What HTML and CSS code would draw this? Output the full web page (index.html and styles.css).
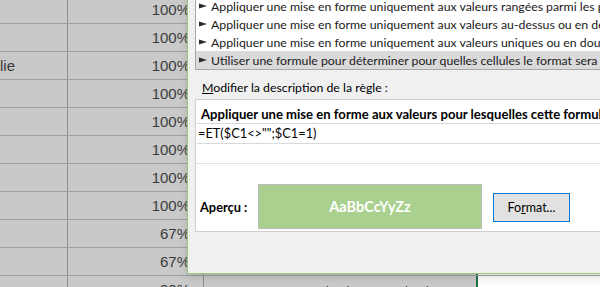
FILE: index.html
```html
<!DOCTYPE html>
<html lang="fr">
<head>
  <meta charset="UTF-8" />
  <title>Nouvelle règle de mise en forme</title>
  <link rel="stylesheet" href="styles.css">
</head>
<body>
  <div class="sheet">
    <div class="row"><div class="cell a"></div><div class="cell b">100%</div><div class="cell c"></div><div class="cell d"></div></div>
    <div class="row"><div class="cell a"></div><div class="cell b">100%</div><div class="cell c"></div><div class="cell d"></div></div>
    <div class="row"><div class="cell a">lie</div><div class="cell b">100%</div><div class="cell c"></div><div class="cell d"></div></div>
    <div class="row"><div class="cell a"></div><div class="cell b">100%</div><div class="cell c"></div><div class="cell d"></div></div>
    <div class="row"><div class="cell a"></div><div class="cell b">100%</div><div class="cell c"></div><div class="cell d"></div></div>
    <div class="row"><div class="cell a"></div><div class="cell b">100%</div><div class="cell c"></div><div class="cell d"></div></div>
    <div class="row"><div class="cell a"></div><div class="cell b">100%</div><div class="cell c"></div><div class="cell d"></div></div>
    <div class="row"><div class="cell a"></div><div class="cell b">100%</div><div class="cell c"></div><div class="cell d"></div></div>
    <div class="row"><div class="cell a"></div><div class="cell b">67%</div><div class="cell c"></div><div class="cell d"></div></div>
    <div class="row"><div class="cell a"></div><div class="cell b">67%</div><div class="cell c"></div><div class="cell d"></div></div>
    <div class="row"><div class="cell a"></div><div class="cell b">33%</div><div class="cell c date">21/07/2020 21/07/2020</div><div class="cell d"></div></div>
  </div>

  <div class="dialog">
    <ul class="rule-types">
      <li><svg class="arrow" width="8" height="6" viewBox="0 0 8 6"><polygon points="0,0.5 8,3 0,5.5"/></svg>Appliquer une mise en forme uniquement aux valeurs rangées parmi les premières ou les dernières valeurs</li>
      <li><svg class="arrow" width="8" height="6" viewBox="0 0 8 6"><polygon points="0,0.5 8,3 0,5.5"/></svg>Appliquer une mise en forme uniquement aux valeurs au-dessus ou en dessous de la moyenne</li>
      <li><svg class="arrow" width="8" height="6" viewBox="0 0 8 6"><polygon points="0,0.5 8,3 0,5.5"/></svg>Appliquer une mise en forme uniquement aux valeurs uniques ou en double</li>
      <li class="selected"><svg class="arrow" width="8" height="6" viewBox="0 0 8 6"><polygon points="0,0.5 8,3 0,5.5"/></svg>Utiliser une formule pour déterminer pour quelles cellules le format sera appliqué</li>
    </ul>

    <div class="label"><u>M</u>odifier la description de la règle :</div>

    <div class="rule-box">
      <div class="rule-title">Appliquer une mise en forme aux valeurs pour lesquelles cette formule est vraie :</div>
      <div class="formula">=ET($C1&lt;&gt;"";$C1=1)</div>
      <div class="spacer"></div>
      <div class="preview-row">
        <span class="preview-label">Aperçu :</span>
        <div class="preview">AaBbCcYyZz</div>
        <button class="btn">Fo<u>r</u>mat...</button>
      </div>
    </div>
  </div>
</body>
</html>
```

FILE: styles.css
```css
html, body { margin: 0; padding: 0; }
body { width: 600px; height: 287px; overflow: hidden; position: relative; background: #fff; font-family: 'Liberation Sans', Arial, sans-serif; }

.sheet { margin-top: -4px; }
.row { display: flex; height: 27px; border-bottom: 1px solid #a0a0a0; }
.cell { height: 27px; line-height: 27px; font-size: 15px; color: #3a3a3a; background: #c9c9c9; white-space: nowrap; overflow: hidden; }
.cell.a { width: 67px; border-right: 1px solid #8c8c8c; }
.cell.b { width: 136px; box-sizing: border-box; border-right: 1px solid #8c8c8c; text-align: right; padding-right: 13px; }
.cell.c { width: 272px; border-right: 2px solid #217346; }
.cell.d { flex: 1; background: #fff; }
.cell.date { padding-left: 103px; box-sizing: border-box; width: 274px; line-height: 32px; }

.dialog {
  position: absolute; left: 187px; top: -10px; width: 430px; height: 284px;
  background: #f0f0f0; border: 1px solid #9cc57c; box-sizing: border-box;
  padding: 0 0 0 7px;
  font-family: Lato, 'Open Sans', sans-serif; font-size: 12.3px; color: #000;
  box-shadow: 0 4px 8px rgba(0,0,0,0.12);
}

.rule-types { list-style: none; margin: 0; padding: 0; background: #fff; border: 1px solid #a8a8a8; border-top: none; height: 79px; box-sizing: border-box; padding-top: 6px; }
.rule-types li { display: flex; align-items: center; height: 18px; white-space: nowrap; overflow: hidden; color: #1a1a1a; }
.rule-types li.selected { background: #dadada; }
.arrow { flex: none; margin: 0 4px 0 3px; fill: #2a2a2a; }

.label { margin: 9px 0 0 7px; height: 20px; line-height: 18px; }
.label u { text-decoration: underline; }

.rule-box { background: #fff; border: 1px solid #cfcfcf; height: 133px; box-sizing: border-box; display: flex; flex-direction: column; }
.rule-title { font-weight: bold; font-size: 13.1px; padding-left: 5px; height: 23px; line-height: 28px; white-space: nowrap; overflow: hidden; }
.formula { border-top: 1px solid #d9d9d9; border-bottom: 1px solid #d9d9d9; margin-left: 1px; height: 19px; line-height: 19px; padding-left: 1px; font-size: 12.8px; }
.spacer { height: 19px; border-bottom: 1px solid #e3e3e3; }
.preview-row { display: flex; align-items: flex-start; flex: 1; padding: 20px 0 0 4px; }
.preview-label { font-weight: bold; font-size: 12.8px; width: 58px; margin-top: 15px; }
.preview { width: 224px; height: 45px; box-sizing: border-box; background: #a9d08e; border: 1px solid #b9b9b9; color: #fff; font-weight: bold; font-size: 14.5px; display: flex; align-items: center; justify-content: center; }
.btn { margin: 9px 0 0 11px; width: 77px; height: 29px; background: #e1e1e1; border: 1px solid #0078d7; font-family: inherit; font-size: 12.5px; color: #000; padding: 0; }
```
